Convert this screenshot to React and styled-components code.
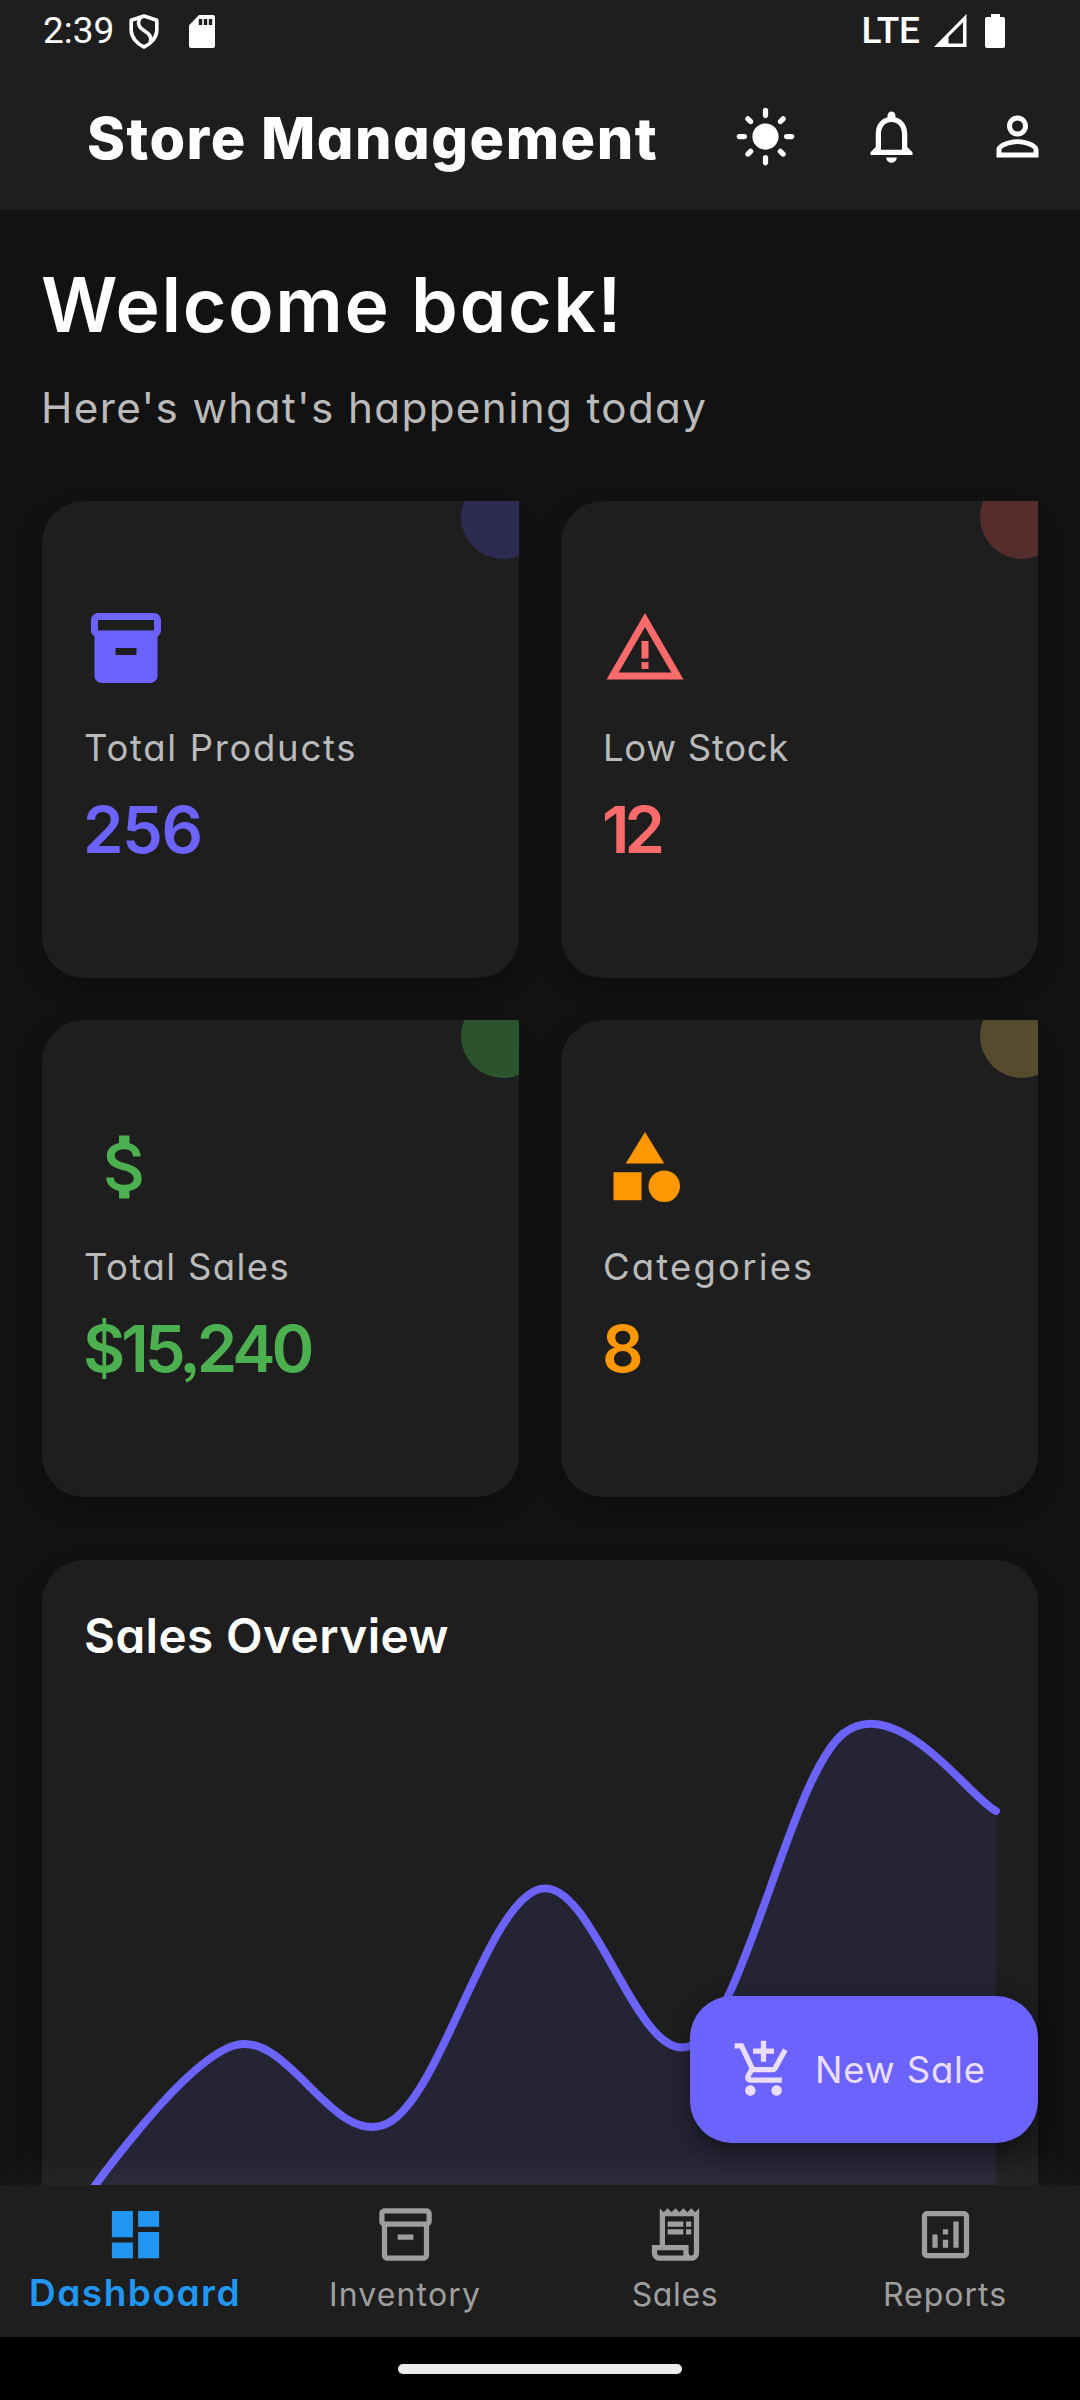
import React from "react";
import styled, { createGlobalStyle } from "styled-components";
import {
  MdLightMode,
  MdNotificationsNone,
  MdPersonOutline,
  MdInventory2,
  MdAttachMoney,
  MdCategory,
  MdAddShoppingCart,
  MdDashboard,
  MdOutlineInventory2,
  MdOutlineReceiptLong,
  MdOutlineAnalytics,
} from "react-icons/md";

const GlobalStyle = createGlobalStyle`
  * { box-sizing: border-box; }
  body {
    margin: 0;
    background: #121212;
    font-family: Inter, "Open Sans", sans-serif;
    font-feature-settings: "cv11", "ss07", "ss03";
  }
`;

const Screen = styled.div`
  position: relative;
  display: flex;
  flex-direction: column;
  width: 1080px;
  height: 2400px;
  overflow: hidden;
  background: #121212;
  color: #fff;
  white-space: nowrap;
`;

/* ---------- status bar ---------- */

const StatusBar = styled.div`
  display: flex;
  align-items: flex-start;
  justify-content: space-between;
  height: 63px;
  padding: 14px 75px 0 43px;
  background: #1e1e1e;
  font-family: Roboto, sans-serif;
  line-height: 34px;
`;

const StatusGroup = styled.div`
  display: flex;
  align-items: flex-start;
`;

const Clock = styled.span`
  width: 86px;
  font-size: 37px;
`;

const Network = styled.span`
  width: 72px;
  font-size: 37px;
  font-weight: 500;
  letter-spacing: -0.2px;
`;

const StatusIcon = styled.svg`
  display: block;
  margin-left: ${(p) => p.$gap || 0}px;
`;

/* ---------- app bar ---------- */

const AppBar = styled.header`
  display: flex;
  align-items: center;
  justify-content: space-between;
  height: 147px;
  padding-left: 87px;
  background: #1e1e1e;
`;

const AppTitle = styled.h1`
  margin: 2px 0 0;
  font-size: 57.6px;
  font-weight: 800;
  letter-spacing: 1.5px;
`;

const Actions = styled.div`
  display: flex;
`;

const IconButton = styled.button`
  display: flex;
  align-items: center;
  justify-content: center;
  width: 126px;
  height: 126px;
  padding: 0;
  border: 0;
  background: none;
  color: #fff;
  font-size: 63px;
`;

/* ---------- content ---------- */

const Content = styled.main`
  flex: 1;
  min-height: 0;
  padding: 42px 42px 0;
  overflow: hidden;
`;

const Welcome = styled.h2`
  margin: 0 0 0 -1px;
  font-size: 75px;
  font-weight: 600;
  line-height: 106px;
  letter-spacing: 1.65px;
`;

const Subtitle = styled.p`
  margin: 19px 0 0 -1px;
  color: #bababa;
  font-size: 42.2px;
  line-height: 62px;
  letter-spacing: 1.37px;
`;

const StatGrid = styled.section`
  display: grid;
  grid-template-columns: 477px 477px;
  grid-auto-rows: 477px;
  gap: 42px;
  margin-top: 62px;
`;

const Card = styled.article`
  position: relative;
  border-radius: 42px;
  background: #1e1e1e;
  box-shadow: 0 10px 26px rgba(0, 0, 0, 0.24);
`;

const StatCard = styled(Card)`
  display: flex;
  flex-direction: column;
  padding: 105px 42px 0;
`;

const CornerClip = styled.div`
  position: absolute;
  inset: 0;
  overflow: hidden;

  &::after {
    content: "";
    position: absolute;
    top: -26px;
    right: -26px;
    width: 84px;
    height: 84px;
    border-radius: 50%;
    background: ${(p) => p.$tint};
  }
`;

const StatIcon = styled.div`
  display: flex;
  height: 84px;
  color: ${(p) => p.$color};
  font-size: 84px;
`;

const StatLabel = styled.span`
  margin-top: 32px;
  color: #bababa;
  font-size: 36.5px;
  line-height: 52px;
  letter-spacing: ${(p) => p.$tracking}px;
`;

const StatValue = styled.strong`
  margin-top: 16px;
  margin-left: -1px;
  color: ${(p) => p.$color};
  font-size: 65px;
  font-weight: 600;
  line-height: 80px;
  letter-spacing: ${(p) => p.$tracking}px;
`;

const ChartCard = styled(Card)`
  height: 714px;
  margin-top: 63px;
  padding: 41px 42px 0;
`;

const ChartTitle = styled.h3`
  margin: 0 0 21px;
  font-size: 47.6px;
  font-weight: 600;
  line-height: 70px;
  letter-spacing: 0.45px;
`;

const Chart = styled.svg`
  display: block;
  overflow: visible;
`;

/* ---------- floating action ---------- */

const NewSale = styled.button`
  position: absolute;
  right: 42px;
  bottom: 257px;
  z-index: 2;
  display: flex;
  align-items: center;
  gap: 20px;
  width: 348px;
  height: 147px;
  padding: 0 0 0 42px;
  border: 0;
  border-radius: 42px;
  background: #6c63ff;
  box-shadow: 0 10px 18px rgba(0, 0, 0, 0.3), 0 2px 26px rgba(0, 0, 0, 0.14);
  color: #eaddff;
  font-family: inherit;
  font-feature-settings: inherit;
  font-size: 36.5px;
  letter-spacing: 0.85px;

  svg {
    font-size: 63px;
  }
`;

/* ---------- bottom navigation ---------- */

const BottomNav = styled.nav`
  position: relative;
  z-index: 1;
  display: grid;
  grid-template-columns: repeat(4, 1fr);
  height: 152.5px;
  background: #1e1e1e;
  box-shadow: 0 0 50px rgba(255, 255, 255, 0.07);
`;

const NavItem = styled.a`
  display: flex;
  flex-direction: column;
  align-items: center;
  padding-top: 18.5px;
  color: ${(p) => (p.$active ? "#2196f3" : "#9e9e9e")};

  svg {
    font-size: 63px;
  }
`;

const NavLabel = styled.span`
  margin-top: 1px;
  font-size: ${(p) => (p.$active ? 37 : 32)}px;
  font-weight: ${(p) => (p.$active ? 600 : 400)};
  line-height: ${(p) => (p.$active ? 52 : 56)}px;
  letter-spacing: ${(p) => p.$tracking}px;
`;

const GestureBar = styled.div`
  position: relative;
  z-index: 1;
  display: flex;
  justify-content: center;
  height: 63px;
  padding-top: 27px;
  background: #000;

  &::after {
    content: "";
    width: 284px;
    height: 10px;
    border-radius: 5px;
    background: #ebebeb;
  }
`;

const WarningIcon = () => (
  <svg width="1em" height="1em" viewBox="0 0 24 24" fill="currentColor">
    <path d="M12 5.99 19.53 19H4.47L12 5.99M12 2 1 21h22L12 2z" />
    <path d="M13 16h-2v2h2zM13 10h-2v5h2z" />
  </svg>
);

const stats = [
  { label: "Total Products", labelTracking: 1.68, value: "256", valueTracking: -1.5, color: "#6c63ff", tint: "#2e2b53", icon: <MdInventory2 /> },
  { label: "Low Stock", labelTracking: 0.7, value: "12", valueTracking: -5, color: "#ff6b6b", tint: "#552d2d", icon: <WarningIcon /> },
  { label: "Total Sales", labelTracking: 1.4, value: "$15,240", valueTracking: -4, color: "#4caf50", tint: "#2b542d", icon: <MdAttachMoney /> },
  { label: "Categories", labelTracking: 2.17, value: "8", valueTracking: 0, color: "#ff9800", tint: "#554b2d", icon: <MdCategory /> },
];

const navItems = [
  { label: "Dashboard", tracking: 1.5, icon: <MdDashboard />, active: true },
  { label: "Inventory", tracking: 1.15, icon: <MdOutlineInventory2 /> },
  { label: "Sales", tracking: 0.63, icon: <MdOutlineReceiptLong /> },
  { label: "Reports", tracking: 1, icon: <MdOutlineAnalytics /> },
];

const sales = [3, 4, 3.5, 5, 4, 6, 5.5];
const points = sales.map((v, i) => ({ x: i * 152, y: 119 + (5.5 - v) * 156 }));

// Smooths the line by carrying a share of each point's tangent to its neighbours.
function curve(pts, smoothness = 0.35) {
  let d = `M${pts[0].x} ${pts[0].y}`;
  let t = { x: 0, y: 0 };
  for (let i = 1; i < pts.length; i++) {
    const prev = pts[i - 1];
    const cur = pts[i];
    const next = pts[i + 1] || cur;
    const c1 = { x: prev.x + t.x, y: prev.y + t.y };
    t = { x: ((next.x - prev.x) / 2) * smoothness, y: ((next.y - prev.y) / 2) * smoothness };
    d += ` C${c1.x} ${c1.y} ${cur.x - t.x} ${cur.y - t.y} ${cur.x} ${cur.y}`;
  }
  return d;
}

const line = curve(points);

export default function App() {
  return (
    <>
      <GlobalStyle />
      <Screen>
        <StatusBar>
          <StatusGroup>
            <Clock>2:39</Clock>
            <StatusIcon width="30" height="35" viewBox="0 0 30 35" fill="none" stroke="#fff" strokeWidth="3.6" strokeLinejoin="round">
              <path d="M15 2 27.8 6.2V16C27.8 23 22.5 29.6 15 33 7.5 29.6 2.2 23 2.2 16V6.2z" />
              <path d="M13.5 2.5C9.5 4.5 8.6 9 10.5 12.4 12.7 16.4 18 17.4 20.6 21.2 22 23.4 22 25.5 21.2 28" />
            </StatusIcon>
            <StatusIcon $gap={30} width="26" height="35" viewBox="0 -1 26 35">
              <path d="M10 0H24a2 2 0 0 1 2 2V31a2 2 0 0 1-2 2H2a2 2 0 0 1-2-2V10.3z" fill="#fff" />
              <path d="M9.8 4h3.4v6H9.8zM14.8 4h3.4v6h-3.4zM19.8 4h3.4v6h-3.4z" fill="#1e1e1e" />
            </StatusIcon>
          </StatusGroup>
          <StatusGroup>
            <Network>LTE</Network>
            <StatusIcon width="33" height="34" viewBox="0 0 33 34" fill="#fff">
              <path fillRule="evenodd" d="M0 33 32.5 0V33zM14.5 22.8V29.6H29V8.2z" />
            </StatusIcon>
            <StatusIcon $gap={18.5} width="20" height="34" viewBox="0 0 20 34" fill="#fff">
              <path d="M6 0h9v3h3a2 2 0 0 1 2 2v27a2 2 0 0 1-2 2H2a2 2 0 0 1-2-2V5a2 2 0 0 1 2-2h4z" />
            </StatusIcon>
          </StatusGroup>
        </StatusBar>

        <AppBar>
          <AppTitle>Store Management</AppTitle>
          <Actions>
            <IconButton><MdLightMode /></IconButton>
            <IconButton><MdNotificationsNone /></IconButton>
            <IconButton><MdPersonOutline /></IconButton>
          </Actions>
        </AppBar>

        <Content>
          <Welcome>Welcome back!</Welcome>
          <Subtitle>Here's what's happening today</Subtitle>
          <StatGrid>
            {stats.map((s) => (
              <StatCard key={s.label}>
                <CornerClip $tint={s.tint} />
                <StatIcon $color={s.color}>{s.icon}</StatIcon>
                <StatLabel $tracking={s.labelTracking}>{s.label}</StatLabel>
                <StatValue $color={s.color} $tracking={s.valueTracking}>{s.value}</StatValue>
              </StatCard>
            ))}
          </StatGrid>
          <ChartCard>
            <ChartTitle>Sales Overview</ChartTitle>
            <Chart width="912" height="525" viewBox="0 0 912 525">
              <path d={`${line} V582 H0 Z`} fill="rgba(108, 99, 255, 0.1)" />
              <path d={line} fill="none" stroke="#6c63ff" strokeWidth="7.9" strokeLinecap="round" />
            </Chart>
          </ChartCard>
        </Content>

        <NewSale>
          <MdAddShoppingCart />
          New Sale
        </NewSale>

        <BottomNav>
          {navItems.map((n) => (
            <NavItem key={n.label} $active={n.active}>
              {n.icon}
              <NavLabel $active={n.active} $tracking={n.tracking}>{n.label}</NavLabel>
            </NavItem>
          ))}
        </BottomNav>
        <GestureBar />
      </Screen>
    </>
  );
}
